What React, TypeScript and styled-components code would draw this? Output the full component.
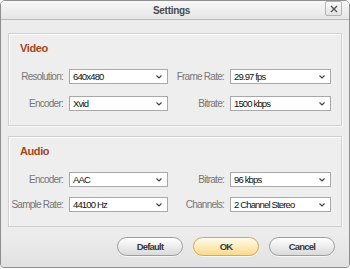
import React from "react";
import styled, { createGlobalStyle } from "styled-components";

const Global = createGlobalStyle`
  html, body { margin: 0; padding: 0; background: #ffffff; }
  body { font-family: "Liberation Sans", Arial, sans-serif; }
  * { box-sizing: border-box; }
`;

const Window = styled.div`
  width: 350px;
  height: 268px;
  border: 1px solid #8e8e8e;
  border-radius: 5px 5px 4px 4px;
  background: #ececec;
  display: flex;
  flex-direction: column;
  overflow: hidden;
`;

const TitleBar = styled.div`
  height: 19px;
  border-bottom: 1px solid #b9b9b9;
  background: linear-gradient(#f7f7f7, #e6e6e6);
  display: grid;
  grid-template-columns: 1fr auto 1fr;
  align-items: center;
  padding-right: 7px;
`;

const Title = styled.div`
  grid-column: 2;
  font-size: 10px;
  font-weight: bold;
  letter-spacing: -0.3px;
  color: #4a4a4a;
  line-height: 12px;
  padding-top: 1px;
`;

const CloseButton = styled.div`
  grid-column: 3;
  justify-self: end;
  align-self: start;
  width: 17px;
  height: 15px;
  border: 1px solid #b4b4b4;
  border-radius: 2px;
  background: linear-gradient(#fbfbfb, #e2e2e2);
  display: flex;
  align-items: center;
  justify-content: center;
`;

const Content = styled.div`
  padding: 13px 7px 0 7px;
  display: flex;
  flex-direction: column;
  gap: 10px;
`;

const Panel = styled.div<{ $h: number }>`
  height: ${(p) => p.$h}px;
  border: 1px solid #d0d0d0;
  box-shadow: inset 1px 1px 0 #ffffff, 1px 1px 0 #fafafa;
  background: #eeeeee;
  padding-top: 8px;
`;

const Grid = styled.div<{ $rowGap: number }>`
  display: grid;
  grid-template-columns: 54px 99px 50px 101px;
  column-gap: 6px;
  row-gap: ${(p) => p.$rowGap}px;
  align-items: center;
`;

const SectionTitle = styled.div<{ $after: number }>`
  grid-column: 1 / -1;
  padding-left: 11px;
  font-size: 11px;
  line-height: 13px;
  font-weight: bold;
  letter-spacing: -0.4px;
  color: #a3461c;
  margin-bottom: ${(p) => p.$after}px;
`;

const Label = styled.div`
  font-size: 10px;
  line-height: 15px;
  letter-spacing: -0.75px;
  color: #777777;
  text-align: right;
  white-space: nowrap;
`;

const SelectBox = styled.div`
  height: 15px;
  border: 1px solid #a8a8a8;
  background: #ffffff;
  display: flex;
  align-items: center;
  justify-content: space-between;
  padding: 0 5px 0 3px;
`;

const SelectText = styled.span`
  font-size: 9.5px;
  letter-spacing: -0.85px;
  color: #111111;
  white-space: nowrap;
`;

const Footer = styled.div`
  flex: 1;
  display: flex;
  justify-content: flex-end;
  align-items: center;
  gap: 10px;
  padding: 0 14px 1px 0;
  background: linear-gradient(#ececec 0%, #ececec 20%, #e1e1e1 100%);
`;

const Button = styled.div<{ $primary?: boolean }>`
  width: 66px;
  height: 19px;
  border-radius: 10px;
  border: 1px solid ${(p) => (p.$primary ? "#e0a25a" : "#9d9d9d")};
  background: ${(p) =>
    p.$primary
      ? "linear-gradient(#fffcee, #fdeab6 55%, #f8d98e)"
      : "linear-gradient(#ffffff, #ebebeb 55%, #dadada)"};
  box-shadow: 0 1px 0 rgba(255,255,255,0.7);
  display: flex;
  align-items: center;
  justify-content: center;
  font-size: 9.5px;
  font-weight: bold;
  letter-spacing: -0.8px;
  color: #3b3b3b;
`;

const Chevron = () => (
  <svg width="6" height="4" viewBox="0 0 6 4">
    <path d="M0.5 0.5 L3 3 L5.5 0.5" fill="none" stroke="#444" strokeWidth="1.2" />
  </svg>
);

const Select = ({ value }: { value: string }) => (
  <SelectBox>
    <SelectText>{value}</SelectText>
    <Chevron />
  </SelectBox>
);

type Row = [string, string, string, string];

const Section = ({
  title,
  rows,
  h,
  rowGap,
}: {
  title: string;
  rows: Row[];
  h: number;
  rowGap: number;
}) => (
  <Panel $h={h}>
    <Grid $rowGap={rowGap}>
      <SectionTitle $after={14 - rowGap}>{title}</SectionTitle>
      {rows.map((r) => (
        <React.Fragment key={r[0]}>
          <Label>{r[0]}</Label>
          <Select value={r[1]} />
          <Label>{r[2]}</Label>
          <Select value={r[3]} />
        </React.Fragment>
      ))}
    </Grid>
  </Panel>
);

export default function App() {
  return (
    <>
      <Global />
      <Window>
        <TitleBar>
          <Title>Settings</Title>
          <CloseButton>
            <svg width="8" height="8" viewBox="0 0 8 8">
              <path d="M1 1 L7 7 M7 1 L1 7" stroke="#555" strokeWidth="1.4" />
            </svg>
          </CloseButton>
        </TitleBar>
        <Content>
          <Section
            title="Video"
            h={93}
            rowGap={12}
            rows={[
              ["Resolution:", "640x480", "Frame Rate:", "29.97 fps"],
              ["Encoder:", "Xvid", "Bitrate:", "1500 kbps"],
            ]}
          />
          <Section
            title="Audio"
            h={91}
            rowGap={10}
            rows={[
              ["Encoder:", "AAC", "Bitrate:", "96 kbps"],
              ["Sample Rate:", "44100 Hz", "Channels:", "2 Channel Stereo"],
            ]}
          />
        </Content>
        <Footer>
          <Button>Default</Button>
          <Button $primary>OK</Button>
          <Button>Cancel</Button>
        </Footer>
      </Window>
    </>
  );
}
